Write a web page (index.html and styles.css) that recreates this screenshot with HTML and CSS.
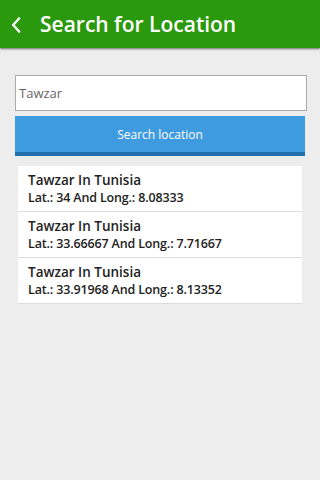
FILE: index.html
```html
<!DOCTYPE html>
<html>
<head>
<meta charset="utf-8">
<link rel="stylesheet" href="styles.css">
</head>
<body>
<header class="bar">
  <svg class="back" width="10" height="16" viewBox="0 0 10 16"><path d="M8 1.5 L2.2 8 L8 14.5" fill="none" stroke="#fff" stroke-width="2.3" stroke-linecap="square"/></svg>
  <h1 class="title">Search for Location</h1>
</header>
<main class="content">
  <div class="field">Tawzar</div>
  <div class="btn">Search location</div>
  <ul class="list">
    <li class="item"><div class="name">Tawzar In Tunisia</div><div class="coords">Lat.: 34 And Long.: 8.08333</div></li>
    <li class="item"><div class="name">Tawzar In Tunisia</div><div class="coords">Lat.: 33.66667 And Long.: 7.71667</div></li>
    <li class="item"><div class="name">Tawzar In Tunisia</div><div class="coords">Lat.: 33.91968 And Long.: 8.13352</div></li>
  </ul>
</main>
</body>
</html>
```
FILE: styles.css
```css
* { box-sizing: border-box; }
html, body { margin: 0; padding: 0; }
body {
  width: 320px; height: 480px; background: #ededed;
  font-family: "Open Sans", "Noto Sans", sans-serif; overflow: hidden;
}
.bar {
  height: 48px; background: #2a990d;
  display: flex; align-items: center; padding-left: 11px;
  box-shadow: 0 1px 2px rgba(0,0,0,0.55);
  position: relative;
}
.back { display: block; margin-top: 1px; }
.title {
  margin: 0 0 0 19px; color: #fff; font-size: 21px; font-weight: 600;
}
.content { padding: 27px 13px 0 15px; }
.field {
  height: 36px; border: 1px solid #aaa; background: #fff;
  padding-left: 3px; display: flex; align-items: center;
  font-size: 13px; color: #666; width: 292px;
}
.btn {
  margin-top: 5px; height: 40px; width: 290px; background: #3f9be0;
  border-bottom: 4px solid #1f70ad; color: #fff; font-size: 12px;
  display: flex; align-items: center; justify-content: center;
}
.list {
  list-style: none; margin: 10px 0 0 3px; padding: 0; width: 284px; background: #fff;
}
.item {
  height: 46px; padding: 5px 0 0 10px; border-bottom: 1px solid #dcdcdc;
  color: #222; font-weight: 600;
}
.name { font-size: 13.5px; line-height: 18px; }
.coords { font-size: 12.5px; line-height: 17px; letter-spacing: -0.15px; }
```
